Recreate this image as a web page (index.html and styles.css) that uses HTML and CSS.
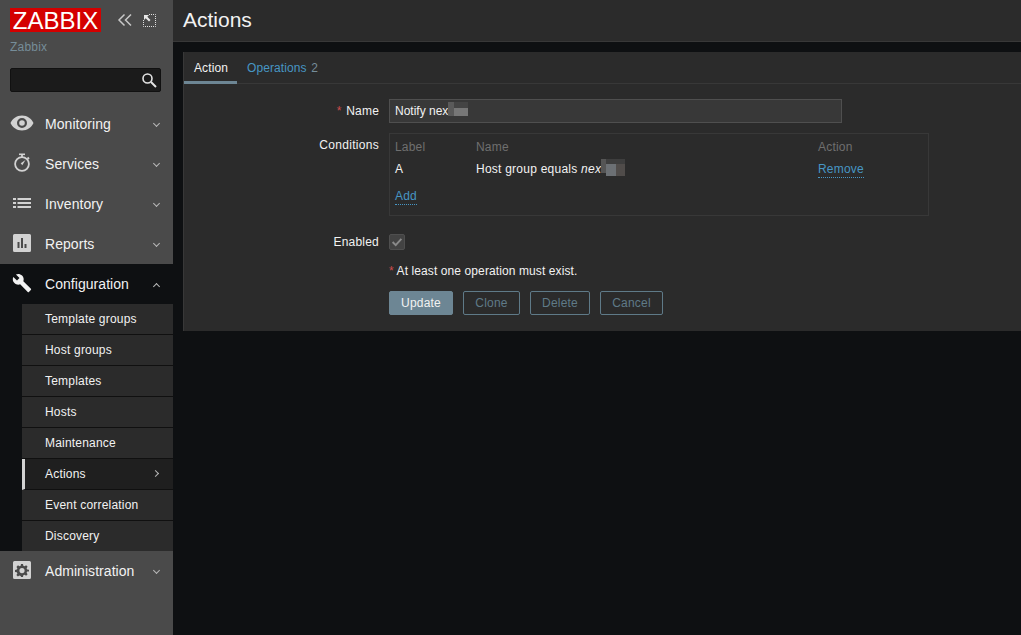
FILE: index.html
```html
<!DOCTYPE html>
<html lang="en">
<head>
<meta charset="utf-8">
<title>Actions</title>
<link rel="stylesheet" href="styles.css">
</head>
<body>
<div class="app">
  <aside class="sidebar">
    <div class="brand">
      <div class="logo">ZABBIX</div>
      <svg class="brand-icon collapse" viewBox="0 0 16 14" width="16" height="14"><path d="M7.500 1.500 2 7l5.500 5.500M14 1.500 8.500 7l5.500 5.500" fill="none" stroke="#c8c8c8" stroke-width="1.500"/></svg>
      <svg class="brand-icon expand" viewBox="0 0 13 13" width="13" height="13"><path d="M6 .5h6.500V12.500H.5V6" fill="none" stroke="#e0e0e0" stroke-dasharray="1 1"/><path d="M1 1h5L4.300 2.700 7.500 6 6 7.500 2.700 4.300 1 6z" fill="#e8e8e8"/></svg>
    </div>
    <div class="server">Zabbix</div>
    <div class="search">
      <svg viewBox="0 0 16 16" width="16" height="16"><circle cx="6.500" cy="6.500" r="4.500" fill="none" stroke="#e4e4e4" stroke-width="1.600"/><path d="m10 10 5 5" stroke="#e4e4e4" stroke-width="2"/></svg>
    </div>
    <nav class="nav">
      <div class="nav-item">
        <svg class="nav-icon" viewBox="0 0 24 16" width="24" height="16"><path fill-rule="evenodd" d="M12 .5C6.500.5 2.400 3.700.5 8c1.900 4.300 6 7.500 11.500 7.500S21.600 12.300 23.500 8C21.600 3.700 17.500.5 12 .5zm0 2.500a5 5 0 1 1 0 10 5 5 0 0 1 0-10zm0 2.200a2.800 2.800 0 1 0 0 5.600 2.800 2.800 0 0 0 0-5.600z" fill="#d2d2d2"/></svg>
        <span class="nav-label">Monitoring</span><span class="chev"></span>
      </div>
      <div class="nav-item">
        <svg class="nav-icon" viewBox="0 0 24 20" width="24" height="20"><path d="M9 .5h6v1.600H9z" fill="#d2d2d2"/><circle cx="12" cy="11" r="6.900" fill="none" stroke="#d2d2d2" stroke-width="1.800"/><path d="M12 2v2M17.500 4.500l1.500 1.500" stroke="#d2d2d2" stroke-width="1.800"/><path d="m15.500 7-4.800 3.200 1.600 2z" fill="#d2d2d2"/></svg>
        <span class="nav-label">Services</span><span class="chev"></span>
      </div>
      <div class="nav-item">
        <svg class="nav-icon" viewBox="0 0 24 12" width="24" height="12"><path d="M3 1h3v2H3zM7.500 1H21v2H7.500zM3 5h3v2H3zM7.500 5H21v2H7.500zM3 9h3v2H3zM7.500 9H21v2H7.500z" fill="#d2d2d2"/></svg>
        <span class="nav-label">Inventory</span><span class="chev"></span>
      </div>
      <div class="nav-item">
        <svg class="nav-icon" viewBox="0 0 24 18" width="24" height="18"><path fill-rule="evenodd" d="M4.500 0h15A1.500 1.500 0 0 1 21 1.500v15a1.500 1.500 0 0 1-1.500 1.500h-15A1.500 1.500 0 0 1 3 16.500v-15A1.500 1.500 0 0 1 4.500 0zM7.500 8v6h2V8zM11 4v10h2V4zM14.500 10v4h2v-4z" fill="#d2d2d2"/></svg>
        <span class="nav-label">Reports</span><span class="chev"></span>
      </div>
      <div class="nav-item open">
        <svg class="nav-icon" viewBox="-2.400 0 28.800 24" width="24" height="20"><path d="M22.700 19l-9.100-9.100c.9-2.300.4-5-1.500-6.900-2-2-5-2.400-7.400-1.300L9 6 6 9 1.600 4.700C.4 7.100.9 10.100 2.900 12.100c1.900 1.900 4.600 2.400 6.900 1.500l9.100 9.100c.4.400 1 .4 1.400 0l2.300-2.300c.5-.4.500-1.100.1-1.400z" fill="#f2f2f2"/></svg>
        <span class="nav-label">Configuration</span><span class="chev up"></span>
      </div>
      <ul class="submenu">
        <li class="sub-item">Template groups</li>
        <li class="sub-item">Host groups</li>
        <li class="sub-item">Templates</li>
        <li class="sub-item">Hosts</li>
        <li class="sub-item">Maintenance</li>
        <li class="sub-item current">Actions<span class="chev right"></span></li>
        <li class="sub-item">Event correlation</li>
        <li class="sub-item">Discovery</li>
      </ul>
      <div class="nav-item">
        <svg class="nav-icon" viewBox="0 0 24 18" width="24" height="18"><path fill-rule="evenodd" d="M4.500 0h15A1.500 1.500 0 0 1 21 1.500v15a1.500 1.500 0 0 1-1.500 1.500h-15A1.500 1.500 0 0 1 3 16.500v-15A1.500 1.500 0 0 1 4.500 0zM11 3l-.3 1.700-1.300.6L8 4.300 6.400 5.900l1 1.400-.6 1.300L5 9v2l1.800.3.6 1.300-1 1.500 1.500 1.500 1.500-1 1.300.5L11 16h2l.3-1.800 1.300-.5 1.500 1 1.500-1.500-1-1.500.6-1.300L19 10.500V8.800l-1.800-.3-.6-1.300 1-1.400-1.500-1.500-1.500 1-1.300-.6L13 3zm1 4a2.500 2.500 0 1 1 0 5.200A2.500 2.500 0 0 1 12 7z" fill="#d2d2d2"/></svg>
        <span class="nav-label">Administration</span><span class="chev"></span>
      </div>
    </nav>
  </aside>
  <main class="main">
    <header class="page-header"><h1>Actions</h1></header>
    <section class="panel">
      <div class="tabs">
        <div class="tab active">Action</div>
        <div class="tab">Operations <span class="count">2</span></div>
      </div>
      <form class="form">
        <div class="row row-name">
          <label class="lbl"><span class="req">*</span> Name</label>
          <div class="input">Notify nex<span class="blur b1"></span><span class="blur b2"></span></div>
        </div>
        <div class="row row-cond">
          <label class="lbl">Conditions</label>
          <div class="cond">
            <div class="cond-grid">
              <span class="th">Label</span><span class="th">Name</span><span class="th">Action</span>
              <span>A</span><span class="cond-name">Host group equals&nbsp;<em>nex</em><span class="blur b3"></span><span class="blur b4"></span></span><span><a class="link">Remove</a></span>
            </div>
            <a class="link add">Add</a>
          </div>
        </div>
        <div class="row row-enabled">
          <label class="lbl">Enabled</label>
          <div class="check"><svg viewBox="0 0 16 16" width="14" height="14"><path d="m3 8 3.500 3.500L13 4.500" fill="none" stroke="#8a8a8a" stroke-width="2.200"/></svg></div>
        </div>
        <div class="note"><span class="req note-req">*</span> At least one operation must exist.</div>
        <div class="buttons">
          <button type="button" class="btn primary">Update</button>
          <button type="button" class="btn">Clone</button>
          <button type="button" class="btn">Delete</button>
          <button type="button" class="btn">Cancel</button>
        </div>
      </form>
    </section>
  </main>
</div>
</body>
</html>
```
FILE: styles.css
```css
* { box-sizing: border-box; }
html, body { margin: 0; height: 100%; }
body {
  background: #0e1012;
  color: #f2f2f2;
  font: 12px/14px "Liberation Sans", Arial, sans-serif;
  letter-spacing: .2px;
  overflow: hidden;
}
.app { display: flex; height: 635px; }

.sidebar {
  width: 173px;
  flex: none;
  background: #4a4a4a;
}
.brand { display: flex; align-items: center; padding: 8px 0 0 10px; height: 32px; }
.logo {
  width: 91px;
  height: 24px;
  background: #d40000;
  color: #fff;
  font: 400 24px/25px "Liberation Sans", sans-serif;
  letter-spacing: 0;
  text-align: center;
}
.brand-icon { flex: none; }
.collapse { margin-left: 16px; }
.expand { margin-left: 10px; }
.server { color: #768d99; padding: 8px 0 0 10px; height: 36px; }
.search {
  margin-left: 10px;
  width: 151px;
  height: 24px;
  background: #1b1b1b;
  border: 1px solid #111;
  border-radius: 2px;
  display: flex;
  justify-content: flex-end;
  align-items: center;
  padding-right: 3px;
}
.nav { margin-top: 12px; }
.nav-item {
  height: 40px;
  display: flex;
  align-items: center;
  color: #f2f2f2;
  font-size: 14px;
  letter-spacing: .05px;
}
.nav-item.open { background: #0e1012; }
.nav-icon { flex: none; margin-left: 10px; margin-top: -2px; }
.nav-label { margin-left: 11px; flex: 1; }
.chev {
  flex: none;
  width: 5px;
  height: 5px;
  margin-right: 14px;
  margin-top: -2px;
  border-right: 1px solid #b8b8b8;
  border-bottom: 1px solid #b8b8b8;
  transform: rotate(45deg);
}
.chev.up { transform: rotate(225deg); margin-top: 4px; }
.chev.right { transform: rotate(-45deg); margin: 0 15px 0 0; }
.submenu {
  list-style: none;
  margin: 0;
  padding: 0 0 0 22px;
  background: #0e1012;
}
.sub-item {
  height: 31px;
  padding: 0 0 1px 23px;
  background: #2b2b2b;
  border-bottom: 1px solid #101010;
  display: flex;
  align-items: center;
  justify-content: space-between;
  color: #f2f2f2;
}
.sub-item:last-child { height: 30px; border-bottom: 0; }
.sub-item.current {
  background: #1f1f1f;
  border-left: 3px solid #d2d2d2;
  padding-left: 20px;
}

.main { flex: 1; min-width: 0; }
.page-header {
  height: 42px;
  background: #2b2b2b;
  border-bottom: 1px solid #383838;
  padding-left: 10px;
}
.page-header h1 { margin: 0; font-weight: 400; font-size: 21px; line-height: 39px; letter-spacing: 0; color: #f2f2f2; }
.panel {
  margin: 10px 0 0 10px;
  height: 279px;
  background: #2b2b2b;
  border-left: 1px solid #383838;
}
.tabs { height: 32px; display: flex; padding-top: 0; border-bottom: 1px solid #383838; }
.tab {
  height: 32px;
  padding: 9px 10px 0;
  color: #4796c4;
  white-space: pre;
  letter-spacing: .1px;
}
.tab.active { color: #f2f2f2; border-bottom: 3px solid #6d8694; width: 53px; }
.count { color: #768d99; margin-left: 1px; }
.form { padding-top: 15px; }
.row { display: flex; }
.lbl { width: 195px; flex: none; text-align: right; margin-right: 10px; color: #f2f2f2; }
.req { color: #cc4d4d; margin-right: 1px; }
.note-req { margin-right: 0; }
.row-name { align-items: center; height: 24px; }
.input {
  width: 453px;
  height: 24px;
  padding: 0 5px;
  line-height: 22px;
  letter-spacing: 0;
  background: #383838;
  border: 1px solid #4f4f4f;
  white-space: nowrap;
  display: flex;
  align-items: center;
}
.blur { display: block; flex: none; }
.b1 { width: 6px; height: 14px; background: #5a5a5a; margin-bottom: 4px; }
.b2 { width: 14px; height: 14px; margin-bottom: 4px; background: linear-gradient(#444 6px, #777 6px); }
.cond-name { display: flex; align-items: flex-start; height: 14px; letter-spacing: .24px; }
.b3 { width: 5px; height: 14px; margin-top: -3px; background: #555; }
.b4 { width: 19px; height: 17px; margin-top: -3px; background: linear-gradient(#3e3e3e 5px, transparent 5px), linear-gradient(90deg, #6c7074 53%, #504c4a 53%); }
.row-cond { margin-top: 10px; }
.row-cond .lbl { padding-top: 5px; letter-spacing: .3px; }
.cond {
  width: 540px;
  height: 83px;
  border: 1px solid #383838;
  padding: 6px 5px 0;
}
.cond-grid { display: grid; grid-template-columns: 81px 342px 1fr; row-gap: 8px; }
.th { color: #6f6f6f; }
.link {
  color: #4796c4;
  border-bottom: 1px dotted #4796c4;
  padding-bottom: 1px;
}
.add { display: inline-block; margin-top: 13px; }
.row-enabled { margin-top: 17px; align-items: center; height: 17px; }
.check {
  width: 16px;
  height: 16px;
  background: #434343;
  border: 1px solid #4f4f4f;
  border-radius: 2px;
  display: flex;
  align-items: center;
  justify-content: center;
}
.note { margin: 14px 0 0 205px; letter-spacing: .1px; }
.buttons { display: flex; gap: 10px; margin: 13px 0 0 205px; }
.btn {
  height: 24px;
  padding: 0;
  font: inherit;
  letter-spacing: inherit;
  background: transparent;
  color: #5f7a88;
  border: 1px solid #5f7a88;
  border-radius: 2px;
  width: 57px;
}
.btn:nth-child(3) { width: 60px; }
.btn:nth-child(4) { width: 63px; }
.btn.primary { background: #6d8694; border-color: #6d8694; color: #f2f2f2; width: 64px; }
```
